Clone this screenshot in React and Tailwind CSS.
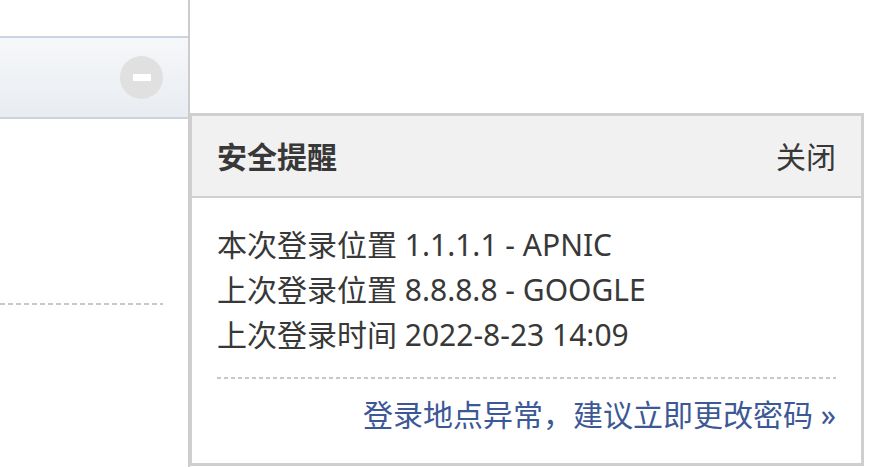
// App.jsx — login security reminder popup over a collapsed panel
import React from 'react';

const FONT = { fontFamily: '"Noto Sans", "Noto Sans CJK SC", sans-serif' };

const lines = [
  '本次登录位置 1.1.1.1 - APNIC',
  '上次登录位置 8.8.8.8 - GOOGLE',
  '上次登录时间 2022-8-23 14:09',
];

export default function App() {
  return (
    <div className="relative h-[467px] w-[884px] overflow-hidden bg-white" style={FONT}>
      {/* left panel */}
      <div className="h-full w-[190px] border-r-2 border-[#cccccc] pt-[36px]">
        <div className="flex h-[83px] items-center justify-end border-y-2 border-[#c8d4e2] bg-gradient-to-b from-[#f6f7f9] to-[#e8ecf1] pr-[25px]">
          <span className="flex h-[43px] w-[43px] items-center justify-center rounded-full bg-[#e0e0e0]">
            <span className="h-[7px] w-[18px] bg-white" />
          </span>
        </div>
        <div className="mt-[184px] h-[2px] w-[163px] bg-[linear-gradient(to_right,#c8c8c8_5px,transparent_5px)] bg-[length:8px_2px]" />
      </div>

      {/* security popup */}
      <div className="absolute left-[189px] top-[113px] w-[675px] border-[3px] border-[#cfcfcf] bg-white text-[#383838]">
        <div className="flex h-[82px] items-center justify-between border-b-2 border-[#d0d0d0] bg-[#f1f1f1] px-[25px] text-[30px]">
          <span className="font-bold">安全提醒</span>
          <span className="cursor-pointer">关闭</span>
        </div>
        <div className="px-[25px] pb-[26px] pt-[24px] text-[30px] leading-[45px]">
          {lines.map((l) => (
            <div key={l} className="whitespace-nowrap">{l}</div>
          ))}
          <div className="mt-[20px] h-[2px] bg-[linear-gradient(to_right,#c8c8c8_4px,transparent_4px)] bg-[length:7px_2px]" />
          <div className="mt-[13px] text-right text-[#3d5896]">登录地点异常，建议立即更改密码 »</div>
        </div>
      </div>
    </div>
  );
}
